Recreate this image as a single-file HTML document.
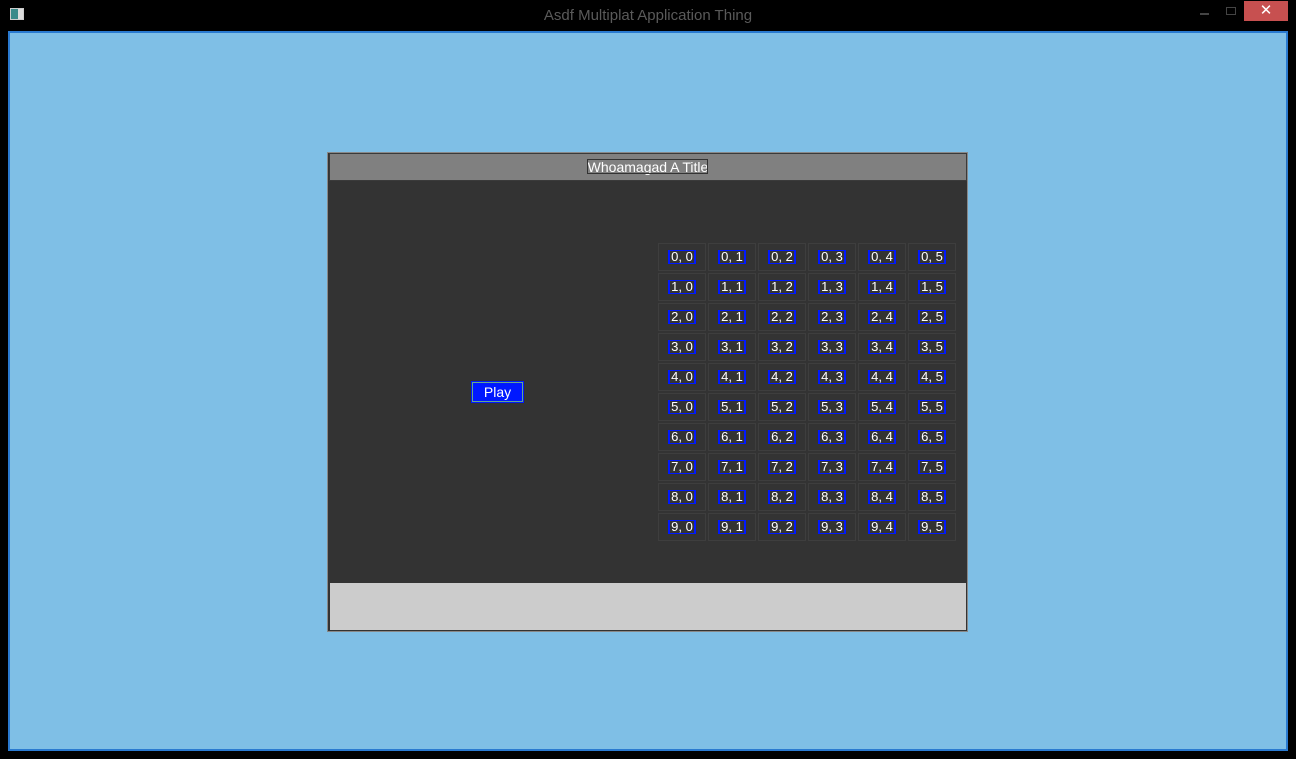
<!DOCTYPE html><html><head><style>
body{margin:0;width:1296px;height:759px;background:#000;position:relative;overflow:hidden;font-family:"Liberation Sans",sans-serif}
.a{position:absolute;box-sizing:border-box}
.cell{position:absolute;width:48px;height:28px;border:1px solid #3e3e3e;box-sizing:border-box}
.lab{position:absolute;left:9px;top:6px;width:28px;height:14px;border:2px solid #0018ff;border-top-width:1px;border-bottom-width:1px;box-sizing:border-box;color:#fff;font-size:13px;line-height:12px;text-align:center;white-space:nowrap;overflow:hidden}
</style></head><body>
<div class="a" style="left:10px;top:8px;width:14px;height:12px;background:linear-gradient(90deg,#3a8a8a 60%,#ddd 60%);border:1px solid #ccc"></div>
<div class="a" style="left:0;width:1296px;top:7px;text-align:center;color:#5a5a5a;font-size:15px">Asdf Multiplat Application Thing</div>
<div class="a" style="left:1200px;top:13px;width:9px;height:2px;background:#444"></div>
<div class="a" style="left:1226px;top:7px;width:10px;height:8px;border:1px solid #444"></div>
<div class="a" style="left:1244px;top:1px;width:44px;height:20px;background:#c75050;color:#fff;text-align:center;font-size:15px;line-height:20px">✕</div>
<div class="a" style="left:8px;top:31px;width:1280px;height:720px;background:#7fbfe6;border:2px solid #2a7ad0"></div>
<div class="a" style="left:327px;top:152px;width:641px;height:480px;background:#333;border:1px solid #888"></div>
<div class="a" style="left:329px;top:153px;width:638px;height:28px;background:#808080;border:1px solid #3a3a3a"></div>
<div class="a" style="left:329px;top:159px;width:638px;text-align:center;color:#fff;font-size:14px">Whoamagad A Title</div>
<div class="a" style="left:587px;top:159px;width:121px;height:15px;border:1px solid #333"></div>
<div class="a" style="left:329px;top:582px;width:638px;height:49px;background:#ccc;border:1px solid #333"></div>
<div class="a" style="left:472px;top:382px;width:51px;height:20px;background:#0018ff;border:1px solid #6a8;outline:1px solid #0018ff;color:#fff;font-size:14px;text-align:center;line-height:18px">Play</div>
<div id="g"></div>
<script>
var h='';for(var r=0;r<10;r++)for(var c=0;c<6;c++){h+='<div class="cell" style="left:'+(658+c*50)+'px;top:'+(243+r*30)+'px"><div class="lab">'+r+', '+c+'</div></div>';}
document.getElementById('g').innerHTML=h;
</script>
</body></html>
